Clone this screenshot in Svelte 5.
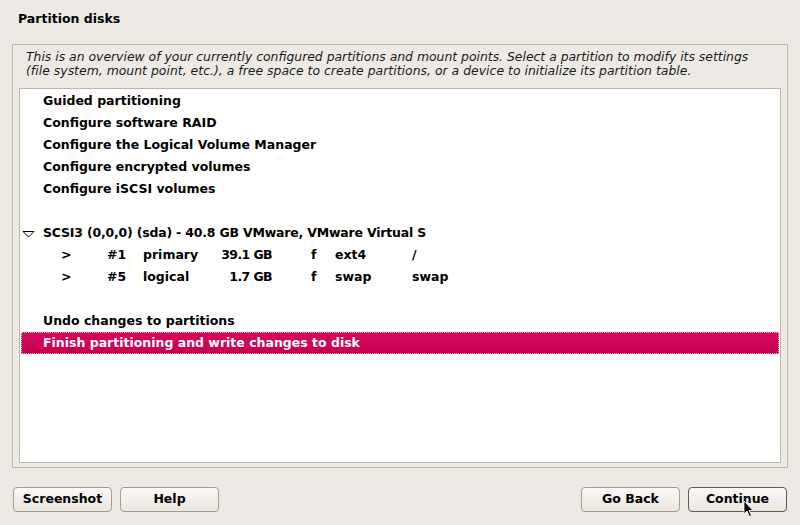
<script>
  const topItems = [
    "Guided partitioning",
    "Configure software RAID",
    "Configure the Logical Volume Manager",
    "Configure encrypted volumes",
    "Configure iSCSI volumes"
  ];

  const partitions = [
    { num: "#1", kind: "primary", size: "39.1 GB", flag: "f", fs: "ext4", mount: "/" },
    { num: "#5", kind: "logical", size: "1.7 GB", flag: "f", fs: "swap", mount: "swap" }
  ];
</script>

<div class="page">
  <h1>Partition disks</h1>

  <section class="frame">
    <p class="intro">
      This is an overview of your currently configured partitions and mount points. Select a partition to modify its settings<br />
      <span class="second">(file system, mount point, etc.), a free space to create partitions, or a device to initialize its partition table.</span>
    </p>

    <div class="list">
      {#each topItems as item}
        <div class="row">{item}</div>
      {/each}

      <div class="row empty"></div>

      <div class="row disk">
        <svg class="expander" width="13" height="8" viewBox="0 0 13 8">
          <path d="M1 1.5 H12 L6.5 7 Z" fill="none" stroke="#000" stroke-width="1" />
        </svg>
        SCSI3 (0,0,0) (sda) - 40.8 GB VMware, VMware Virtual S
      </div>

      {#each partitions as p}
        <div class="row part">
          <span>&gt;</span>
          <span>{p.num}</span>
          <span>{p.kind}</span>
          <span class="size">{p.size}</span>
          <span class="flag">{p.flag}</span>
          <span>{p.fs}</span>
          <span>{p.mount}</span>
        </div>
      {/each}

      <div class="row empty"></div>

      <div class="row">Undo changes to partitions</div>
      <div class="row selected">Finish partitioning and write changes to disk</div>
    </div>
  </section>

  <footer>
    <div class="group">
      <button>Screenshot</button>
      <button>Help</button>
    </div>
    <div class="group">
      <button>Go Back</button>
      <button class="default">Continue</button>
    </div>
  </footer>

  <svg class="cursor" width="12" height="18" viewBox="0 0 12 18">
    <path d="M1 1 V14 L4 11 L6.5 16.5 L8.5 15.5 L6 10.5 H10 Z" fill="#000" stroke="#fff" stroke-width="0.8" />
  </svg>
</div>

<style>
  :global(body) {
    margin: 0;
    background: #edeae5;
  }

  .page {
    position: relative;
    width: 800px;
    height: 525px;
    box-sizing: border-box;
    padding: 0 12px;
    overflow: hidden;
    font-family: "DejaVu Sans", sans-serif;
    font-size: 12.5px;
    color: #000;
    background: #edeae5;
  }

  h1 {
    margin: 0;
    height: 44px;
    padding: 11px 0 0 6px;
    box-sizing: border-box;
    font-size: 12.5px;
    line-height: 15px;
    font-weight: bold;
  }

  .frame {
    box-sizing: border-box;
    height: 424px;
    padding: 5px 6px 4px;
    border: 1px solid #bfb6a8;
    display: flex;
    flex-direction: column;
  }

  .intro {
    margin: 0;
    height: 38px;
    padding-left: 7px;
    font-size: 12.4px;
    line-height: 14px;
    font-style: italic;
    color: #1a1a1a;
    white-space: nowrap;
  }

  .second {
    letter-spacing: 0.025px;
  }

  .list {
    flex: 1;
    border: 1px solid #bfb6a8;
    background: #fff;
    box-sizing: border-box;
    padding: 1px 1px 0;
  }

  .row {
    position: relative;
    height: 22px;
    line-height: 22px;
    padding-left: 22px;
    font-weight: bold;
    white-space: nowrap;
  }

  .disk {
    letter-spacing: -0.2px;
  }

  .expander {
    position: absolute;
    left: 1px;
    top: 8px;
  }

  .part {
    display: grid;
    grid-template-columns: 46px 36px 70px 59px 63px 77px 60px;
    padding-left: 40px;
  }

  .size {
    text-align: right;
    letter-spacing: -0.6px;
  }

  .flag {
    padding-left: 39px;
  }

  .selected {
    background: linear-gradient(#d80a5c, #c4004e);
    color: #fff;
    outline: 1px dotted #f5b5d0;
    outline-offset: -1px;
  }

  footer {
    display: flex;
    justify-content: space-between;
    padding: 19px 1px 0;
  }

  .group {
    display: flex;
    gap: 8px;
  }

  button {
    width: 99px;
    height: 25px;
    padding: 0 0 2px;
    border: 1px solid #a79d8d;
    border-radius: 4px;
    background: linear-gradient(#fbf9f8, #e9e5df);
    font-family: inherit;
    font-size: 12.5px;
    font-weight: bold;
    color: #000;
  }

  .default {
    border-color: #5f5a52;
  }

  .cursor {
    position: absolute;
    left: 743px;
    top: 500px;
  }
</style>
